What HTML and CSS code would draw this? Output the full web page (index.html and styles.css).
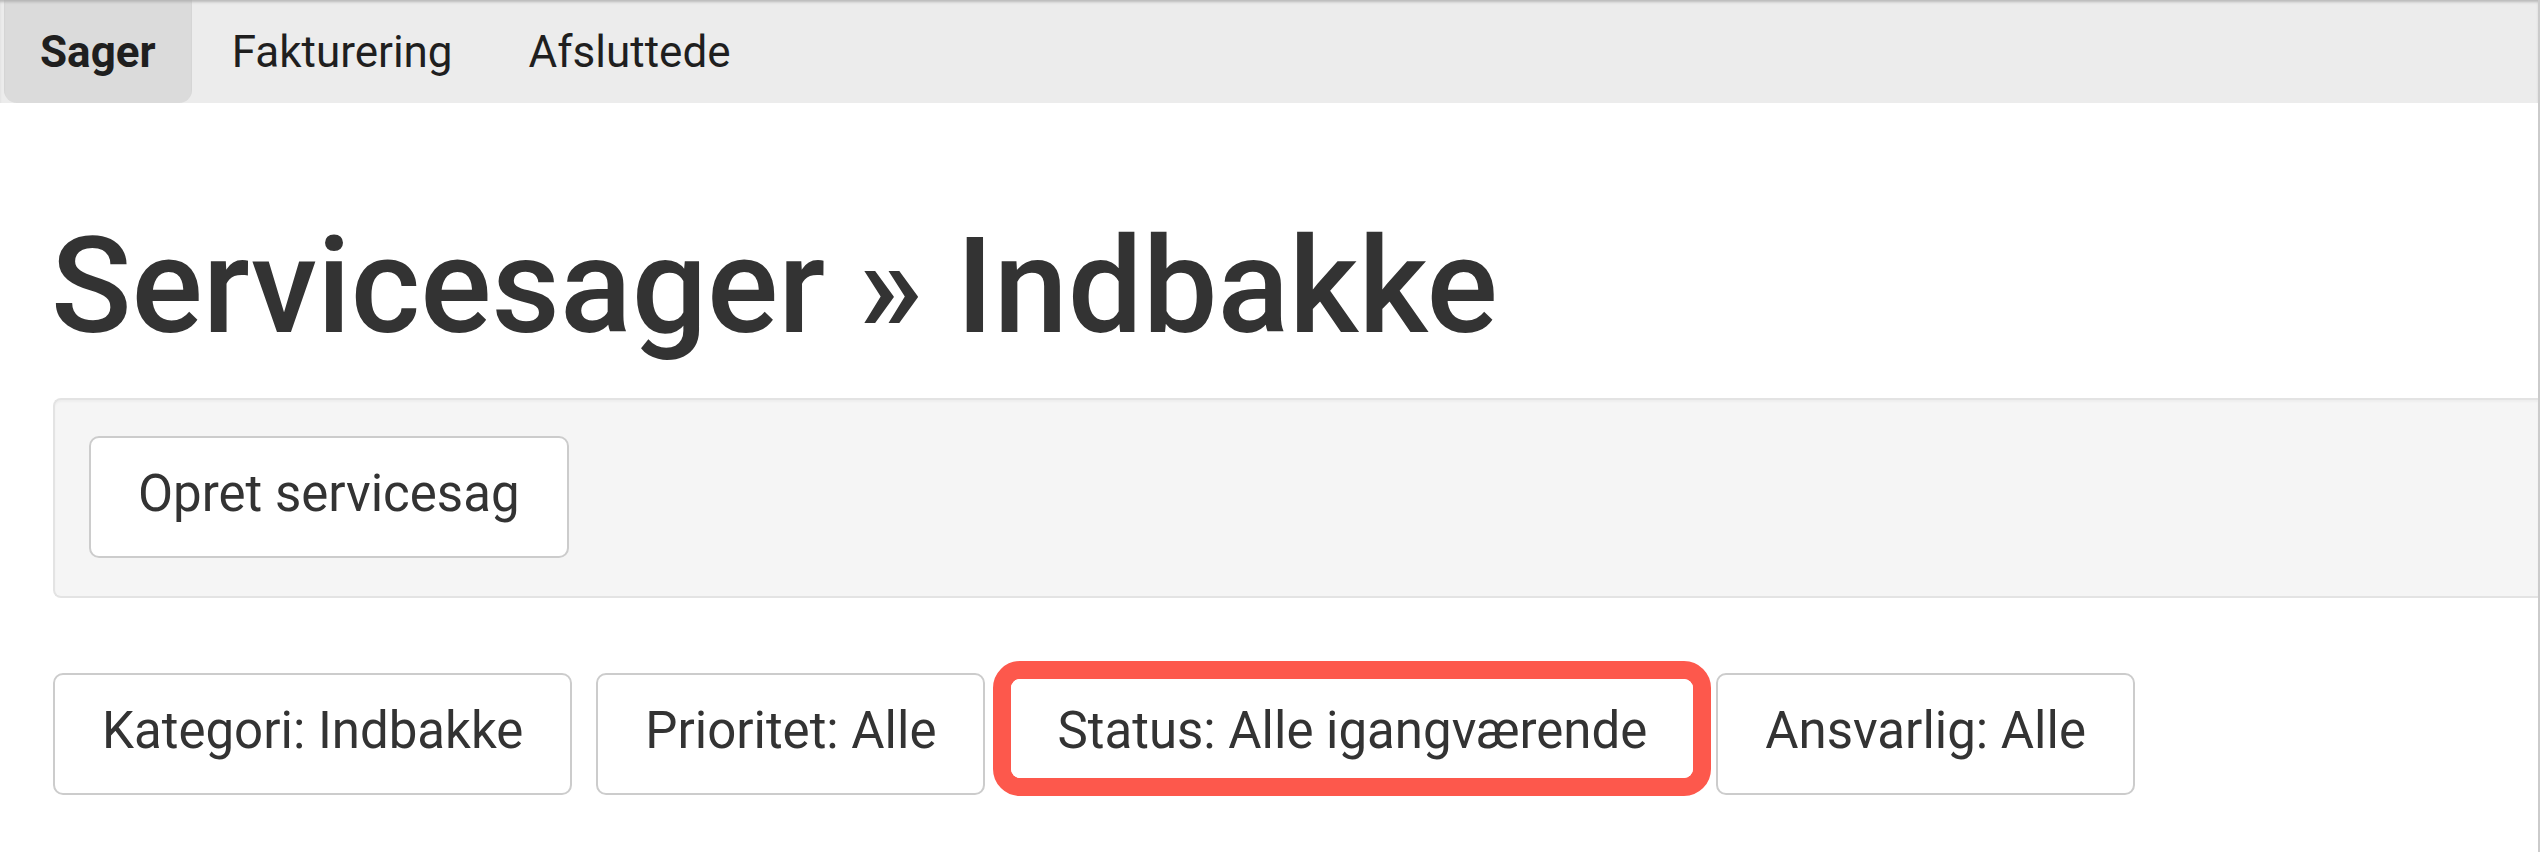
FILE: index.html
```html
<!DOCTYPE html>
<html lang="da">
<head>
<meta charset="utf-8">
<title>Servicesager » Indbakke</title>
<link rel="stylesheet" href="styles.css">
</head>
<body>
<div class="page">
  <nav class="tabs">
    <a class="tab active">Sager</a>
    <a class="tab">Fakturering</a>
    <a class="tab">Afsluttede</a>
  </nav>
  <main class="content">
    <h1 class="title">Servicesager » Indbakke</h1>
    <div class="well">
      <button class="btn">Opret servicesag</button>
    </div>
    <div class="filters">
      <button class="btn filter">Kategori: Indbakke</button>
      <button class="btn filter prio">Prioritet: Alle</button>
      <div class="highlight">
        <button class="btn inner">Status: Alle igangværende</button>
      </div>
      <button class="btn filter resp">Ansvarlig: Alle</button>
    </div>
  </main>
</div>
</body>
</html>
```

FILE: styles.css
```css
html, body {
  margin: 0;
  padding: 0;
  background: #ffffff;
}

body {
  font-family: Roboto, "Liberation Sans", Arial, sans-serif;
  overflow: hidden;
}

.page {
  box-sizing: border-box;
  width: 100%;
  height: 100vh;
  border-right: 2px solid #cbcbcb;
}

.tabs {
  display: flex;
  gap: 4px;
  height: 103px;
  padding-left: 4px;
  background: #ececec;
  box-shadow: inset 0 3px 3px -1px rgba(0, 0, 0, 0.22);
}

.tab {
  display: flex;
  align-items: center;
  padding: 0 36px;
  font-size: 44px;
  color: #1f1f1f;
  text-decoration: none;
}

.tab.active {
  background: #dbdbdb;
  font-weight: 700;
  border-radius: 0 0 13px 13px;
  box-shadow: inset 0 3px 3px -1px rgba(0, 0, 0, 0.18);
}

.content {
  padding-left: 53px;
}

.title {
  margin: 111px 0 38px -2px;
  font-size: 133px;
  line-height: 1.1;
  font-weight: 500;
  color: #333333;
  white-space: nowrap;
}

.well {
  box-sizing: border-box;
  height: 200px;
  padding: 36px 34px;
  background: #f5f5f5;
  border: 2px solid #e3e3e3;
  border-right: none;
  border-radius: 8px 0 0 8px;
  box-shadow: inset 0 2px 2px rgba(0, 0, 0, 0.03);
}

.btn {
  display: block;
  box-sizing: border-box;
  margin: 0;
  padding: 20px 47px 25px;
  font-family: Roboto, "Liberation Sans", Arial, sans-serif;
  font-size: 51px;
  line-height: 1.42857;
  color: #333333;
  background: #ffffff;
  border: 2px solid #cccccc;
  border-radius: 10px;
  white-space: nowrap;
}

.filters {
  display: flex;
  align-items: flex-start;
  margin-top: 63px;
}

.filter {
  margin-top: 12px;
}

.prio {
  margin-left: 24px;
}

.highlight {
  margin-left: 8px;
  border: 18px solid #fd584c;
  border-radius: 27px;
  background: #ffffff;
}

.btn.inner {
  border: none;
  border-radius: 9px;
  padding: 16px 46px 10px;
}

.resp {
  margin-left: 5px;
}
```
